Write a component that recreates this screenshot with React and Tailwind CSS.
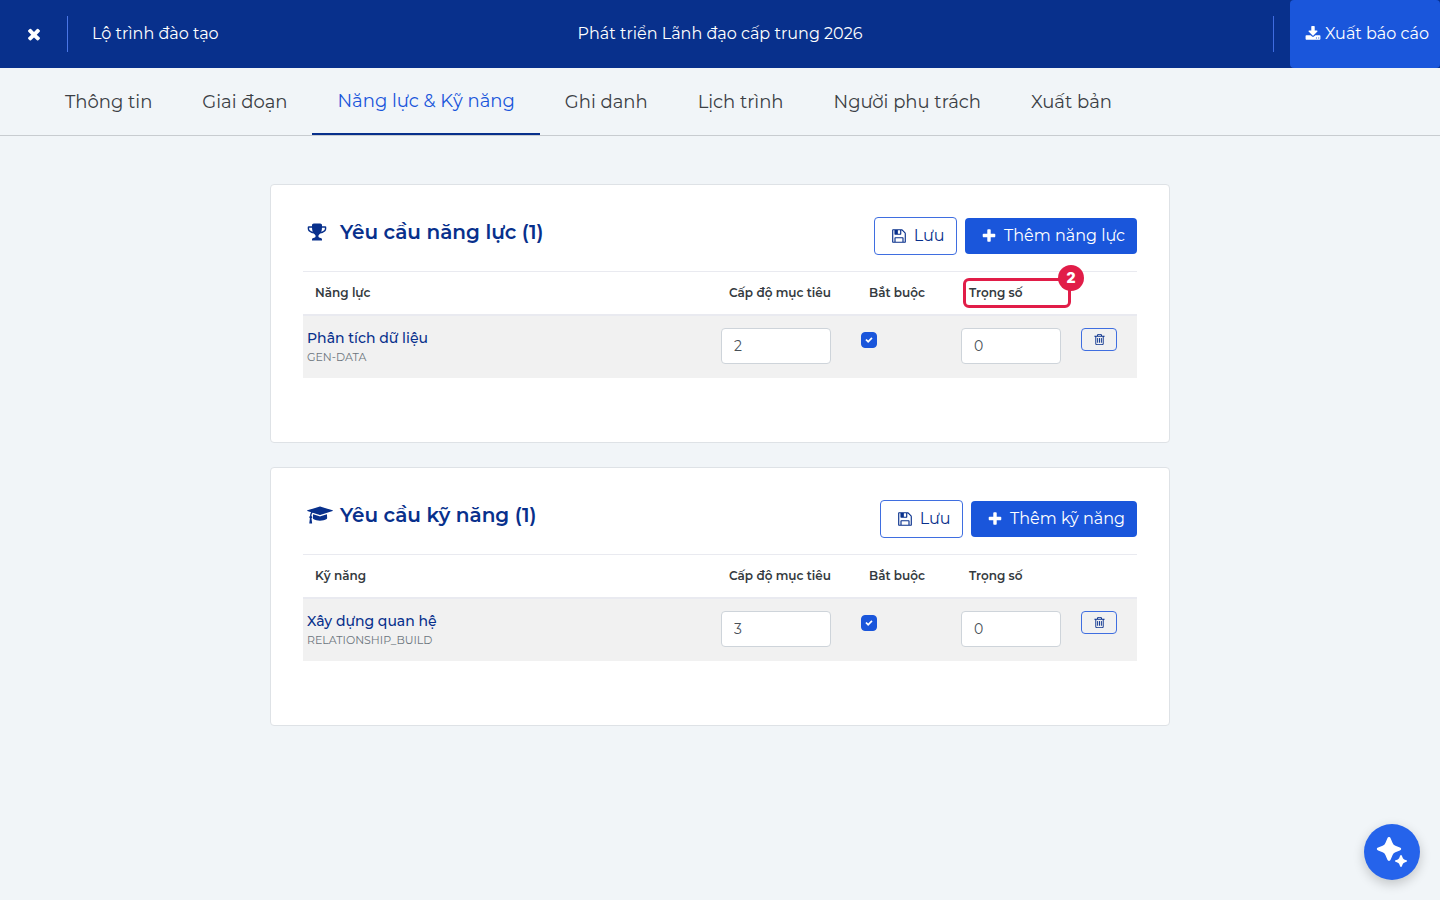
import clsx from "clsx";

const ICONS = {
  close: {
    viewBox: "0 0 1792 1792",
    path: "M1490 1322q0 40-28 68l-136 136q-28 28-68 28t-68-28l-294-294-294 294q-28 28-68 28t-68-28l-136-136q-28-28-28-68t28-68l294-294-294-294q-28-28-28-68t28-68l136-136q28-28 68-28t68 28l294 294 294-294q28-28 68-28t68 28l136 136q28 28 28 68t-28 68l-294 294 294 294q28 28 28 68z",
  },
  download: {
    viewBox: "0 0 1792 1792",
    path: "M1344 1344q0-26-19-45t-45-19-45 19-19 45 19 45 45 19 45-19 19-45zm256 0q0-26-19-45t-45-19-45 19-19 45 19 45 45 19 45-19 19-45zm128-224v320q0 40-28 68t-68 28h-1472q-40 0-68-28t-28-68v-320q0-40 28-68t68-28h465l135 136q58 56 136 56t136-56l136-136h464q40 0 68 28t28 68zm-325-569q17 41-14 70l-448 448q-18 19-45 19t-45-19l-448-448q-31-29-14-70 17-39 59-39h256v-448q0-26 19-45t45-19h256q26 0 45 19t19 45v448h256q42 0 59 39z",
  },
  plus: {
    viewBox: "0 0 1792 1792",
    path: "M1600 736v192q0 40-28 68t-68 28h-416v416q0 40-28 68t-68 28h-192q-40 0-68-28t-28-68v-416h-416q-40 0-68-28t-28-68v-192q0-40 28-68t68-28h416v-416q0-40 28-68t68-28h192q40 0 68 28t28 68v416h416q40 0 68 28t28 68z",
  },
  save: {
    viewBox: "0 0 1792 1792",
    path: "M512 1536h768v-384h-768v384zm896 0h128v-896q0-14-10-38.5t-20-34.5l-281-281q-10-10-34-20t-39-10v416q0 40-28 68t-68 28h-576q-40 0-68-28t-28-68v-416h-128v1280h128v-416q0-40 28-68t68-28h832q40 0 68 28t28 68v416zm-384-928v-320q0-13-9.5-22.5t-22.5-9.5h-192q-13 0-22.5 9.5t-9.5 22.5v320q0 13 9.5 22.5t22.5 9.5h192q13 0 22.5-9.5t9.500-22.500zm640 32v928q0 40-28 68t-68 28h-1344q-40 0-68-28t-28-68v-1344q0-40 28-68t68-28h928q40 0 88 20t76 48l280 280q28 28 48 76t20 88z",
  },
  trash: {
    viewBox: "0 0 1792 1792",
    path: "M704 736v576q0 14-9 23t-23 9h-64q-14 0-23-9t-9-23v-576q0-14 9-23t23-9h64q14 0 23 9t9 23zm256 0v576q0 14-9 23t-23 9h-64q-14 0-23-9t-9-23v-576q0-14 9-23t23-9h64q14 0 23 9t9 23zm256 0v576q0 14-9 23t-23 9h-64q-14 0-23-9t-9-23v-576q0-14 9-23t23-9h64q14 0 23 9t9 23zm128 724v-948h-896v948q0 22 7 40.5t14.5 27 10.5 8.5h832q3 0 10.5-8.5t14.5-27 7-40.5zm-672-1076h448l-48-117q-7-9-17-11h-317q-10 2-17 11zm928 32v64q0 14-9 23t-23 9h-96v948q0 83-47 143.5t-113 60.5h-832q-66 0-113-58.5t-47-141.5v-952h-96q-14 0-23-9t-9-23v-64q0-14 9-23t23-9h309l70-167q15-37 54-63t79-26h320q40 0 79 26t54 63l70 167h309q14 0 23 9t9 23z",
  },
  trophy: {
    viewBox: "0 0 1792 1792",
    path: "M522 883q-74-162-74-371h-256v96q0 78 94.5 162t235.5 113zm1078-275v-96h-256q0 209-74 371 141-29 235.5-113t94.5-162zm128-128v128q0 71-41.5 143t-112 130-173 97.5-215.5 44.5q-42 54-95 95-38 34-52.5 72.5t-14.5 89.5q0 54 30.5 91t97.5 37q75 0 133.5 45.5t58.5 114.5v64q0 14-9 23t-23 9h-832q-14 0-23-9t-9-23v-64q0-69 58.5-114.5t133.5-45.5q67 0 97.5-37t30.5-91q0-51-14.5-89.5t-52.5-72.5q-53-41-95-95-113-5-215.5-44.5t-173-97.5-112-130-41.5-143v-128q0-40 28-68t68-28h288v-96q0-66 47-113t113-47h576q66 0 113 47t47 113v96h288q40 0 68 28t28 68z",
  },
  graduation: {
    viewBox: "0 0 2304 1792",
    path: "M1774 836l18 316q4 69-82 128t-235 93.5-323 34.5-323-34.5-235-93.5-82-128l18-316 574 181q22 7 48 7t48-7zm530-324q0 23-22 31l-1120 352q-4 1-10 1t-10-1l-652-206q-43 34-71 111.5t-34 178.5q63 36 63 109 0 69-58 107l58 433q2 14-8 25-9 11-24 11h-192q-15 0-24-11-10-11-8-25l58-433q-58-38-58-107 0-73 65-111 11-207 98-330l-333-104q-22-8-22-31t22-31l1120-352q4-1 10-1t10 1l1120 352q22 8 22 31z",
  },
  check: {
    viewBox: "0 0 1792 1792",
    path: "M1671 566q0 40-28 68l-724 724-136 136q-28 28-68 28t-68-28l-136-136-362-362q-28-28-28-68t28-68l136-136q28-28 68-28t68 28l294 295 656-657q28-28 68-28t68 28l136 136q28 28 28 68z",
  },
};

const Icon = ({ name, className }) => (
  <svg viewBox={ICONS[name].viewBox} className={clsx("shrink-0", className)} fill="currentColor" aria-hidden="true">
    <path d={ICONS[name].path} />
  </svg>
);

const TABS = [
  "Thông tin",
  "Giai đoạn",
  "Năng lực & Kỹ năng",
  "Ghi danh",
  "Lịch trình",
  "Người phụ trách",
  "Xuất bản",
];
const ACTIVE_TAB = "Năng lực & Kỹ năng";

const SECTIONS = [
  {
    id: "competency",
    icon: "trophy",
    iconClass: "size-5",
    title: "Yêu cầu năng lực (1)",
    addLabel: "Thêm năng lực",
    column: "Năng lực",
    callout: "2",
    rows: [{ name: "Phân tích dữ liệu", code: "GEN-DATA", level: 2, required: true, weight: 0 }],
  },
  {
    id: "skill",
    icon: "graduation",
    iconClass: "h-5 w-[26px]",
    title: "Yêu cầu kỹ năng (1)",
    addLabel: "Thêm kỹ năng",
    column: "Kỹ năng",
    rows: [{ name: "Xây dựng quan hệ", code: "RELATIONSHIP_BUILD", level: 3, required: true, weight: 0 }],
  },
];

const TopBar = () => (
  <header className="grid h-[68px] grid-cols-[1fr_auto_1fr] items-center bg-[#08308c] text-base text-white">
    <div className="flex items-center">
      <button type="button" aria-label="Đóng" className="flex h-9 w-[68px] items-center justify-center border-r border-[#4a76e6]">
        <Icon name="close" className="size-[18px]" />
      </button>
      <span className="pl-6">Lộ trình đào tạo</span>
    </div>
    <h1>Phát triển Lãnh đạo cấp trung 2026</h1>
    <div className="flex h-full items-center justify-end gap-4">
      <div className="h-9 w-px bg-[#3f6ce0]" />
      <button type="button" className="flex h-full w-[150px] items-center justify-center gap-1 whitespace-nowrap rounded bg-[#1a56db] pl-1">
        <Icon name="download" className="size-4" />
        Xuất báo cáo
      </button>
    </div>
  </header>
);

const TabBar = () => (
  <nav className="flex h-[68px] border-b border-[#c8ccd0] px-10">
    {TABS.map((tab) => (
      <a
        key={tab}
        href="#"
        aria-current={tab === ACTIVE_TAB ? "page" : undefined}
        className={clsx(
          "flex items-center whitespace-nowrap px-[25px] text-lg",
          tab === ACTIVE_TAB ? "border-b-2 border-[#08308c] text-[#1a56db]" : "text-[#3b4045]"
        )}
      >
        {tab}
      </a>
    ))}
  </nav>
);

const NumberField = ({ label, value, className }) => (
  <input
    type="text"
    inputMode="numeric"
    aria-label={label}
    defaultValue={value}
    className={clsx("block h-9 rounded border border-[#ced4da] bg-white px-3 text-sm text-[#495057]", className)}
  />
);

const RequirementRow = ({ row }) => (
  <tr className="h-[62px] bg-[#f1f1f1] align-top">
    <td className="px-1 pt-3">
      <div className="text-sm leading-5 font-medium text-[#08308c]">{row.name}</div>
      <div className="text-[11px] leading-[18px] text-[#6c757d]">{row.code}</div>
    </td>
    <td className="px-1 pt-3">
      <NumberField label={`Cấp độ mục tiêu: ${row.name}`} value={row.level} className="w-[110px]" />
    </td>
    <td className="px-1 pt-4">
      <label className="grid size-4">
        <input
          type="checkbox"
          aria-label={`Bắt buộc: ${row.name}`}
          defaultChecked={row.required}
          className="peer col-start-1 row-start-1 size-4 appearance-none rounded border border-[#adb5bd] bg-white checked:border-[#1a56db] checked:bg-[#1a56db]"
        />
        <Icon name="check" className="pointer-events-none col-start-1 row-start-1 hidden size-2 place-self-center text-white peer-checked:block" />
      </label>
    </td>
    <td className="px-1 pt-3">
      <NumberField label={`Trọng số: ${row.name}`} value={row.weight} className="w-[100px]" />
    </td>
    <td className="px-1 pt-3">
      <button
        type="button"
        aria-label={`Xóa ${row.name}`}
        className="flex h-[23px] w-9 items-center justify-center rounded border border-[#3f6ee0] text-[#08308c]"
      >
        <Icon name="trash" className="size-[13px]" />
      </button>
    </td>
  </tr>
);

const RequirementCard = ({ section }) => (
  <section className="rounded border border-[#dee2e6] bg-white px-8 pt-8 pb-16">
    <div className="flex h-[54px] items-start justify-between">
      <h2 className="flex h-[30px] items-center pl-1 text-xl font-semibold text-[#08308c]">
        <span className="flex w-[33px]">
          <Icon name={section.icon} className={section.iconClass} />
        </span>
        {section.title}
      </h2>
      <div className="flex items-center gap-2 text-base">
        <button
          type="button"
          className="flex h-[38px] w-[83px] items-center justify-center gap-[7px] rounded border border-[#3f6ee0] pl-1 text-[#08308c]"
        >
          <Icon name="save" className="size-4" />
          Lưu
        </button>
        <button
          type="button"
          className="flex h-9 items-center gap-[7px] whitespace-nowrap rounded bg-[#1a56db] pr-3 pl-4 text-white"
        >
          <Icon name="plus" className="size-4" />
          {section.addLabel}
        </button>
      </div>
    </div>

    <table className="w-full table-fixed border-separate border-spacing-0 text-left">
      <colgroup>
        <col />
        <col className="w-[140px]" />
        <col className="w-[100px]" />
        <col className="w-[120px]" />
        <col className="w-[60px]" />
      </colgroup>
      <thead className="text-xs leading-5 text-[#343a40] [&_th]:h-[45px] [&_th]:whitespace-nowrap [&_th]:border-t [&_th]:border-b-2 [&_th]:border-[#e9eaf0] [&_th]:px-3 [&_th]:font-semibold">
        <tr>
          <th scope="col">{section.column}</th>
          <th scope="col">Cấp độ mục tiêu</th>
          <th scope="col">Bắt buộc</th>
          <th scope="col" className="relative">
            Trọng số
            {section.callout && (
              <span className="pointer-events-none absolute top-1.5 left-1.5 h-[30px] w-[108px] rounded-md border-3 border-[#e11d48]">
                <span className="absolute -top-4 -right-4 flex size-[26px] items-center justify-center rounded-full bg-[#e11d48] font-['Inter',sans-serif] text-sm font-black text-white">
                  {section.callout}
                </span>
              </span>
            )}
          </th>
          <th scope="col" aria-label="Thao tác" />
        </tr>
      </thead>
      <tbody>
        {section.rows.map((row) => (
          <RequirementRow key={row.code} row={row} />
        ))}
      </tbody>
    </table>
  </section>
);

const AssistantButton = () => (
  <button
    type="button"
    aria-label="Trợ lý AI"
    className="fixed right-5 bottom-5 flex size-14 items-center justify-center rounded-full bg-[#2563eb] text-white shadow-[0_4px_12px_rgba(0,0,0,0.2)]"
  >
    <svg viewBox="0 0 32 32" className="size-8" fill="currentColor" aria-hidden="true">
      <path d="M13 1q1.200 0 1.700 1.400l1.900 4.500q.8 2 2.800 2.800l4.500 1.900q1.300.5 1.300 1.400t-1.300 1.400l-4.500 1.900q-2 .8-2.800 2.800l-1.900 4.500q-.5 1.400-1.700 1.400t-1.700-1.400l-1.900-4.500q-.8-2-2.800-2.800l-4.500-1.900q-1.300-.5-1.300-1.400t1.300-1.400l4.500-1.900q2-.8 2.800-2.800l1.900-4.500q.5-1.400 1.700-1.400z" />
      <path d="M25 19q.6 0 .9.800l.9 2.200q.4 1 1.400 1.400l2.100.8q.8.300.8.800t-.8.800l-2.100.9q-1 .4-1.400 1.400l-.9 2.100q-.3.800-.9.800t-.9-.8l-.9-2.100q-.4-1-1.400-1.400l-2.100-.9q-.8-.3-.8-.8t.8-.8l2.100-.8q1-.4 1.400-1.400l.9-2.200q.3-.8.900-.8z" />
    </svg>
  </button>
);

const App = () => (
  <div className="min-h-screen bg-[#f1f5f8] font-['Montserrat','Inter',sans-serif]">
    <TopBar />
    <TabBar />
    <main className="mx-auto flex max-w-[900px] flex-col gap-6 py-12">
      {SECTIONS.map((section) => (
        <RequirementCard key={section.id} section={section} />
      ))}
    </main>
    <AssistantButton />
  </div>
);

export default App;
